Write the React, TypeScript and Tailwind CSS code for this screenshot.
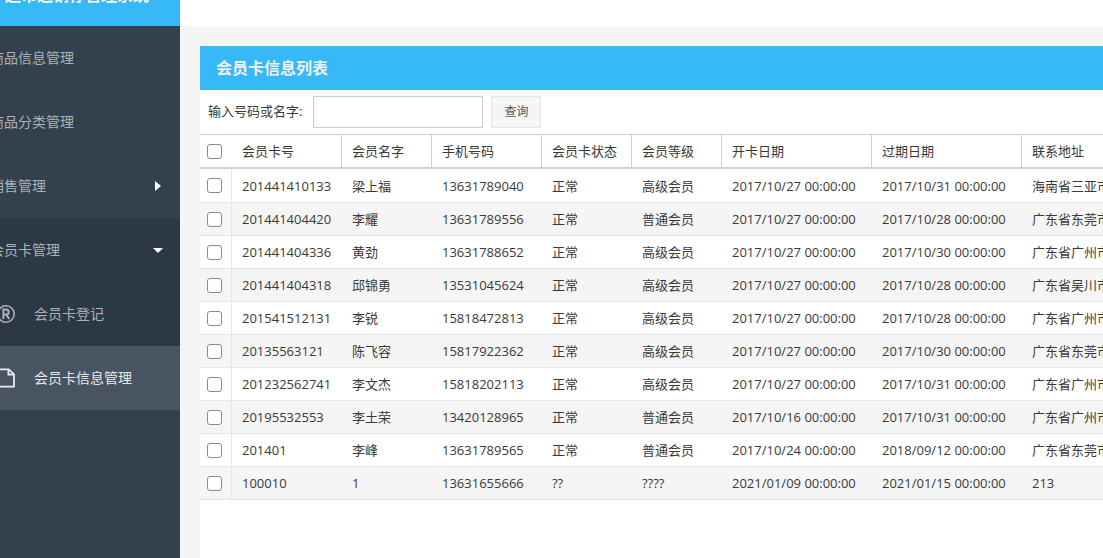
import React from "react";

const members = [
  ["201441410133", "梁上福", "13631789040", "正常", "高级会员", "2017/10/27 00:00:00", "2017/10/31 00:00:00", "海南省三亚市"],
  ["201441404420", "李耀", "13631789556", "正常", "普通会员", "2017/10/27 00:00:00", "2017/10/28 00:00:00", "广东省东莞市"],
  ["201441404336", "黄劲", "13631788652", "正常", "高级会员", "2017/10/27 00:00:00", "2017/10/30 00:00:00", "广东省广州市"],
  ["201441404318", "邱锦勇", "13531045624", "正常", "高级会员", "2017/10/27 00:00:00", "2017/10/28 00:00:00", "广东省吴川市"],
  ["201541512131", "李锐", "15818472813", "正常", "高级会员", "2017/10/27 00:00:00", "2017/10/28 00:00:00", "广东省广州市"],
  ["20135563121", "陈飞容", "15817922362", "正常", "高级会员", "2017/10/27 00:00:00", "2017/10/30 00:00:00", "广东省东莞市"],
  ["201232562741", "李文杰", "15818202113", "正常", "高级会员", "2017/10/27 00:00:00", "2017/10/31 00:00:00", "广东省广州市"],
  ["20195532553", "李土荣", "13420128965", "正常", "普通会员", "2017/10/16 00:00:00", "2017/10/31 00:00:00", "广东省广州市"],
  ["201401", "李峰", "13631789565", "正常", "普通会员", "2017/10/24 00:00:00", "2018/09/12 00:00:00", "广东省东莞市"],
  ["100010", "1", "13631655666", "??", "????", "2021/01/09 00:00:00", "2021/01/15 00:00:00", "213"],
];

const columns = [
  { label: "会员卡号", width: "w-[110px]" },
  { label: "会员名字", width: "w-[90px]" },
  { label: "手机号码", width: "w-[110px]" },
  { label: "会员卡状态", width: "w-[90px]" },
  { label: "会员等级", width: "w-[90px]" },
  { label: "开卡日期", width: "w-[150px]" },
  { label: "过期日期", width: "w-[150px]" },
  { label: "联系地址", width: "w-[200px]" },
];

function Tick({ label }: { label: string }) {
  return (
    <input
      type="checkbox"
      aria-label={label}
      className="block size-[15px] appearance-none rounded-[3px] border border-[#8c8c8c] bg-white checked:bg-[#36b9f6]"
    />
  );
}

function RegisteredIcon() {
  return (
    <svg viewBox="0 0 18 18" className="size-[18px]" fill="none" stroke="currentColor" aria-hidden="true">
      <circle cx="9" cy="9" r="8.2" strokeWidth="1.6" />
      <path d="M6.4 14V4.6h2.8a2.5 2.5 0 0 1 0 5H6.4M9.4 9.6l2.8 4.4" strokeWidth="2" />
    </svg>
  );
}

function FileIcon() {
  return (
    <svg viewBox="0 0 18 20" className="h-5 w-[18px]" fill="none" stroke="currentColor" strokeWidth="1.8" aria-hidden="true">
      <path d="M1 1.3h10.8l5.2 5v12.4H1z" strokeLinejoin="round" />
      <path d="M11.4 1.4v5.2H17" />
    </svg>
  );
}

function Sidebar() {
  const row = "flex h-16 items-center pl-[30px] pr-[17px]";
  return (
    <aside className="-ml-10 w-[220px] shrink-0 bg-[#33404d] text-sm text-[#adb2b7]">
      <h1 className="-mt-[34px] flex h-[60px] items-center bg-[#36b9f6] pb-[2px] pl-[45px] text-base font-bold text-white">
        超市进销存管理系统
      </h1>
      <nav>
        <a href="#goods" className={row}>商品信息管理</a>
        <a href="#category" className={row}>商品分类管理</a>
        <a href="#sales" className={`${row} justify-between`}>
          销售管理
          <svg viewBox="0 0 10 10" className="size-[10px] fill-white" aria-hidden="true">
            <path d="M2 0l6 5-6 5z" />
          </svg>
        </a>
        <div className="bg-[#2c3845]">
          <a href="#cards" className={`${row} justify-between`}>
            会员卡管理
            <svg viewBox="0 0 10 10" className="size-[10px] fill-white" aria-hidden="true">
              <path d="M0 3h10L5 8z" />
            </svg>
          </a>
          <a href="#register" className="flex h-16 items-center gap-[19px] pl-[37px]">
            <RegisteredIcon />
            会员卡登记
          </a>
          <a href="#info" className="flex h-16 items-center gap-[19px] bg-[#485461] pl-[37px] text-[#e8eaec]">
            <FileIcon />
            会员卡信息管理
          </a>
        </div>
      </nav>
    </aside>
  );
}

function MemberTable() {
  return (
    <table className="w-max table-fixed border-separate border-spacing-0 whitespace-nowrap text-left text-[13px] leading-5">
      <thead>
        <tr>
          <th className="h-[35px] w-8 border-t border-b-2 border-[#cfcfcf] p-0 pl-[7px]">
            <Tick label="全选" />
          </th>
          {columns.map((c, i) => (
            <th
              key={c.label}
              className={`${c.width} border-t border-b-2 border-[#cfcfcf] p-0 pl-[10px] font-normal ${i < 7 ? "border-r" : ""}`}
            >
              {c.label}
            </th>
          ))}
        </tr>
      </thead>
      <tbody>
        {members.map((m) => (
          <tr key={m[0]} className="h-[33px] first:h-[34px] even:bg-[#f5f5f5]">
            <td className="border-r border-b border-[#e6e6e6] p-0 pl-[7px]">
              <Tick label={m[1]} />
            </td>
            {m.map((v, i) => (
              <td key={i} className="border-b border-[#e6e6e6] p-0 pl-[10px]">{v}</td>
            ))}
          </tr>
        ))}
      </tbody>
    </table>
  );
}

export default function App() {
  return (
    <div className="flex min-h-screen overflow-hidden bg-[#f5f5f5] font-['Open_Sans','Noto_Sans_CJK_SC',sans-serif] text-[#393939]">
      <Sidebar />
      <div className="flex min-w-0 flex-1 flex-col">
        <header className="h-[26px] bg-white" />
        <main className="mt-5 ml-5 flex-1 overflow-hidden bg-white">
          <h2 className="flex h-11 items-center bg-[#36b9f6] px-4 text-base font-bold text-[#f0f0f0]">会员卡信息列表</h2>
          <form className="flex h-11 items-center px-2" onSubmit={(e) => e.preventDefault()}>
            <label htmlFor="keyword" className="mr-[11px] text-[13px]">输入号码或名字:</label>
            <input
              id="keyword"
              type="text"
              className="mr-2 h-8 w-[170px] border border-[#cccccc] bg-white px-2 text-[13px] outline-none"
            />
            <button type="submit" className="h-8 border border-[#e5e5e5] bg-[#f5f5f5] px-3 text-xs text-[#555555]">
              查询
            </button>
          </form>
          <MemberTable />
        </main>
      </div>
    </div>
  );
}
